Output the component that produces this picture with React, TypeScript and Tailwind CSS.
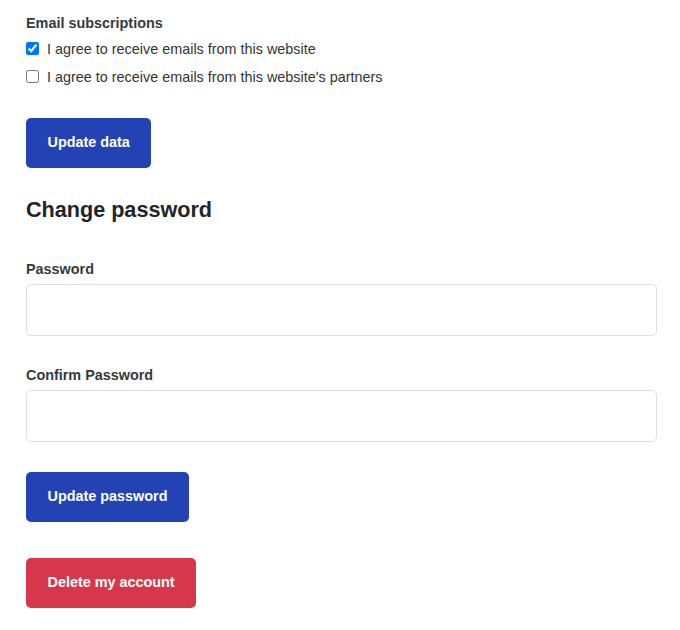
import React from "react";

export default function App() {
  return (
    <div
      className="bg-white w-[680px] h-[630px] pl-[26px] pr-[23px] pt-[13px] text-[#333333]"
      style={{ fontFamily: '"Liberation Sans", Arial, sans-serif' }}
    >
      <div className="text-[14.4px] leading-[21.6px] font-bold text-[#343a40]">Email subscriptions</div>
      <div className="mt-[1px]">
        <label className="h-[28px] flex items-center gap-[8px] text-[14.4px] leading-[21.6px] text-[#333333]">
          <input type="checkbox" defaultChecked className="w-[13px] h-[13px] m-0 -translate-y-[1px]" />
          <span>I agree to receive emails from this website</span>
        </label>
        <label className="h-[28px] flex items-center gap-[8px] text-[14.4px] leading-[21.6px] text-[#333333]">
          <input type="checkbox" className="w-[13px] h-[13px] m-0 -translate-y-[1px]" />
          <span>I agree to receive emails from this website's partners</span>
        </label>
      </div>
      <button className="mt-[26.4px] block h-[49.6px] px-[21.5px] rounded-[5px] bg-[#2343b5] text-white font-bold text-[14.4px] leading-[21.6px]">
        Update data
      </button>

      <h2 className="mt-[29.6px] text-[21.6px] leading-[25.92px] font-bold text-[#212529]">Change password</h2>

      <div className="mt-[35.6px] text-[14.4px] leading-[21.6px] font-bold text-[#343a40]">Password</div>
      <input type="password" className="mt-[3.7px] block w-full h-[52px] rounded-[5px] border border-[#dcdfe3] bg-white" />

      <div className="mt-[28.7px] text-[14.4px] leading-[21.6px] font-bold text-[#343a40]">Confirm Password</div>
      <input type="password" className="mt-[3.7px] block w-full h-[52px] rounded-[5px] border border-[#dcdfe3] bg-white" />

      <button className="mt-[30px] block h-[49.6px] px-[21.5px] rounded-[5px] bg-[#2343b5] text-white font-bold text-[14.4px] leading-[21.6px]">
        Update password
      </button>
      <button className="mt-[36.7px] block h-[49.6px] px-[21.5px] rounded-[5px] bg-[#d6374a] text-white font-bold text-[14.4px] leading-[21.6px]">
        Delete my account
      </button>
    </div>
  );
}
